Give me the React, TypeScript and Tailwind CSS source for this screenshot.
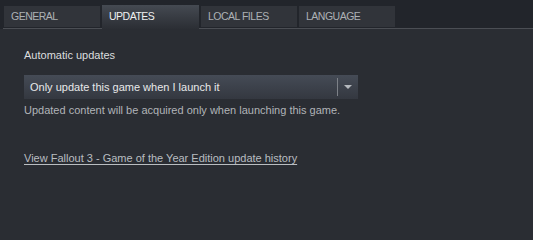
const TABS = ["GENERAL", "UPDATES", "LOCAL FILES", "LANGUAGE"];

export default function App() {
  const active = "UPDATES";
  return (
    <div className="w-full min-h-screen bg-[#2a2d33] overflow-hidden text-[11px] font-['Liberation_Sans',Arimo,Arial,sans-serif]">
      <div className="bg-[#22252b] h-[29px] pt-[6px] pl-[4px] flex gap-[2px] relative">
        <div className="absolute left-[3px] right-0 top-[28px] h-px bg-[#4b4e54]" />
        {TABS.map((t) =>
          t === active ? (
            <div
              key={t}
              className="relative z-10 w-[97px] h-[24px] -mt-px pl-[7px] flex items-center bg-gradient-to-b from-[#454a52] to-[#2b2e34] text-[10.5px] tracking-[-0.5px] text-[#eef0f1]"
            >
              {t}
            </div>
          ) : (
            <div
              key={t}
              className="w-[96px] h-[21px] pl-[7px] flex items-center bg-[#31343a] text-[10.5px] tracking-[-0.5px] text-[#adb1b5]"
            >
              {t}
            </div>
          )
        )}
      </div>

      <div className="pl-[24px] pt-[19px]">
        <div className="text-[#dcdedf] leading-[14px]">Automatic updates</div>
        <div className="mt-[13px] w-[334px] h-[24px] flex items-center bg-gradient-to-b from-[#454b56] to-[#343840] text-[#e8e9ea]">
          <span className="flex-1 pl-[6px]">Only update this game when I launch it</span>
          <div className="w-px h-[18px] bg-[#7d8188]" />
          <div className="w-[20px] flex justify-center">
            <div className="w-0 h-0 border-l-[4px] border-r-[4px] border-t-[4px] border-l-transparent border-r-transparent border-t-[#b5b9be]" />
          </div>
        </div>
        <div className="mt-[4px] text-[#b1b4b8] leading-[14px]">
          Updated content will be acquired only when launching this game.
        </div>
        <div className="mt-[34px] leading-[14px]">
          <a className="underline text-[#b9bdc1] underline-offset-[2px]" href="#">
            View Fallout 3 - Game of the Year Edition update history
          </a>
        </div>
      </div>
    </div>
  );
}
